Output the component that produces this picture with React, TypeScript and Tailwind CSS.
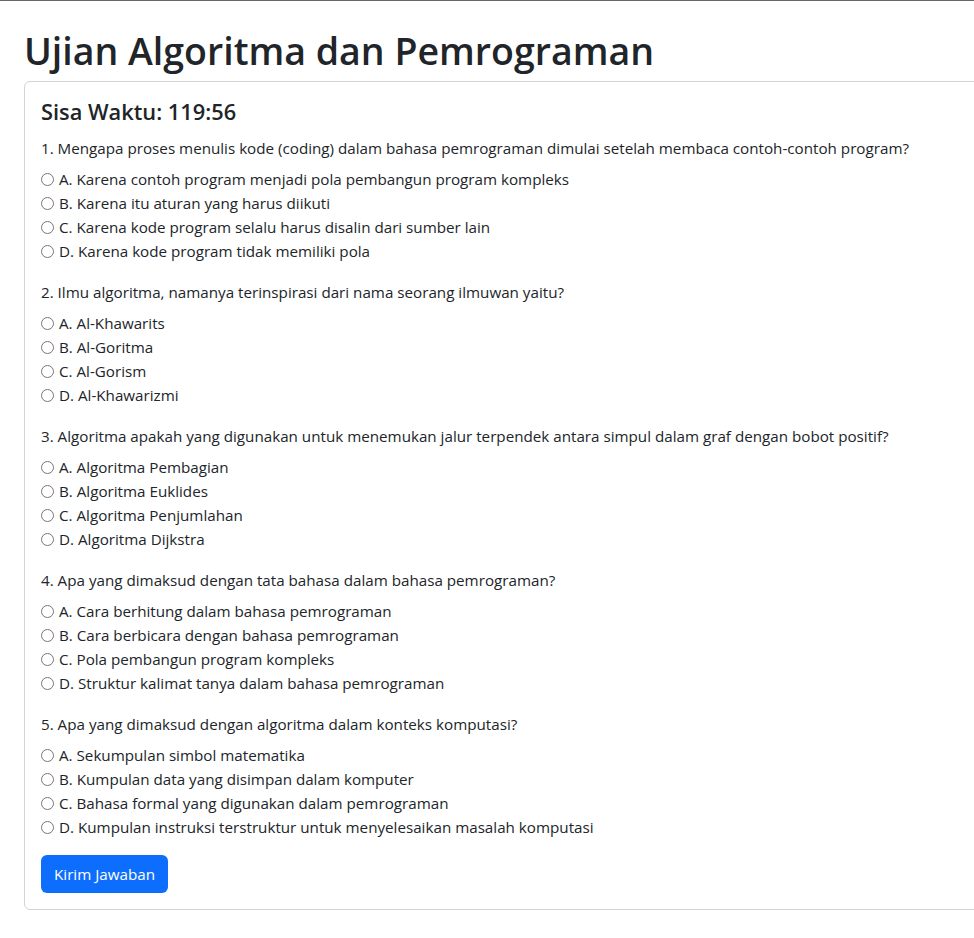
import React from "react";

const questions: { q: string; opts: string[] }[] = [
  {
    q: "1. Mengapa proses menulis kode (coding) dalam bahasa pemrograman dimulai setelah membaca contoh-contoh program?",
    opts: [
      "A. Karena contoh program menjadi pola pembangun program kompleks",
      "B. Karena itu aturan yang harus diikuti",
      "C. Karena kode program selalu harus disalin dari sumber lain",
      "D. Karena kode program tidak memiliki pola",
    ],
  },
  {
    q: "2. Ilmu algoritma, namanya terinspirasi dari nama seorang ilmuwan yaitu?",
    opts: ["A. Al-Khawarits", "B. Al-Goritma", "C. Al-Gorism", "D. Al-Khawarizmi"],
  },
  {
    q: "3. Algoritma apakah yang digunakan untuk menemukan jalur terpendek antara simpul dalam graf dengan bobot positif?",
    opts: [
      "A. Algoritma Pembagian",
      "B. Algoritma Euklides",
      "C. Algoritma Penjumlahan",
      "D. Algoritma Dijkstra",
    ],
  },
  {
    q: "4. Apa yang dimaksud dengan tata bahasa dalam bahasa pemrograman?",
    opts: [
      "A. Cara berhitung dalam bahasa pemrograman",
      "B. Cara berbicara dengan bahasa pemrograman",
      "C. Pola pembangun program kompleks",
      "D. Struktur kalimat tanya dalam bahasa pemrograman",
    ],
  },
  {
    q: "5. Apa yang dimaksud dengan algoritma dalam konteks komputasi?",
    opts: [
      "A. Sekumpulan simbol matematika",
      "B. Kumpulan data yang disimpan dalam komputer",
      "C. Bahasa formal yang digunakan dalam pemrograman",
      "D. Kumpulan instruksi terstruktur untuk menyelesaikan masalah komputasi",
    ],
  },
];

export default function App() {
  return (
    <div
      className="w-[974px] min-h-[938px] overflow-hidden bg-white border-t border-[#666] text-[#212529]"
      style={{ fontFamily: '"Open Sans", "Noto Sans", sans-serif' }}
    >
      <div className="pl-6 pt-[28px]">
        <h1 className="m-0 mb-2 text-[37.5px] leading-[44px] font-semibold">
          Ujian Algoritma dan Pemrograman
        </h1>
        <div className="w-[1000px] border border-[#d3d4d5] rounded-[6px] p-4">
          <h4 className="m-0 mb-[10px] text-[21.8px] leading-[28px] font-semibold">
            Sisa Waktu: 119:56
          </h4>
          <form>
            {questions.map((item, qi) => (
              <div key={qi} className="mb-[17px] text-[15.2px]">
                <p className="m-0 leading-6">{item.q}</p>
                <div className="mt-[7px]">
                  {item.opts.map((o, oi) => (
                    <label key={oi} className="flex items-center h-6 leading-6">
                      <input
                        type="radio"
                        name={`q${qi}`}
                        className="m-0 mr-[5px] w-[13px] h-[13px]"
                      />
                      <span>{o}</span>
                    </label>
                  ))}
                </div>
              </div>
            ))}
            <button
              type="button"
              className="mt-[-1px] h-[38px] px-[13px] rounded-[6px] bg-[#0d6efd] text-white text-[15.2px] leading-6"
            >
              Kirim Jawaban
            </button>
          </form>
        </div>
      </div>
    </div>
  );
}
